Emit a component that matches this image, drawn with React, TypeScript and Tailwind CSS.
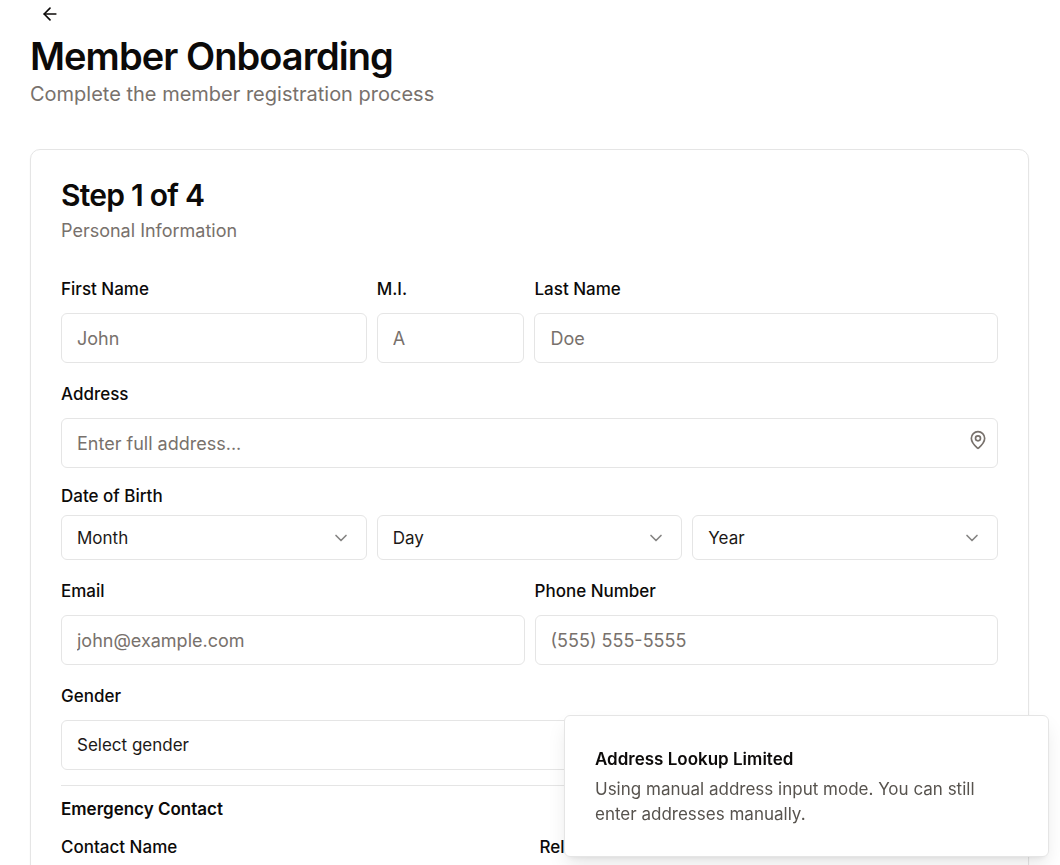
import React from "react";
import { ArrowLeft, ChevronDown, MapPin } from "lucide-react";

const field =
  "block w-full rounded-md border border-[#e5e5e5] bg-white px-[15px] text-[#1c1917] placeholder:text-[#78716c] outline-none focus:border-[#a8a29e]";
const inputStyle = `${field} mt-[11px] h-[50px] text-lg`;
const selectStyle = `${field} appearance-none pt-[2px] text-[17px]`;
const labelStyle = "block text-[17px] leading-[26px] font-medium text-[#0c0a09]";

function TextField({ id, label, placeholder, type = "text", className = "" }: {
  id: string; label: string; placeholder: string; type?: string; className?: string;
}) {
  return (
    <div className={className}>
      <label htmlFor={id} className={labelStyle}>{label}</label>
      <input id={id} type={type} placeholder={placeholder} className={inputStyle} />
    </div>
  );
}

function DatePart({ label }: { label: string }) {
  return (
    <div className="relative">
      <select aria-label={label} className={`${selectStyle} h-[45px]`}>
        <option>{label}</option>
      </select>
      <ChevronDown className="pointer-events-none absolute top-[13px] right-4 size-5 text-[#858483]" />
    </div>
  );
}

export default function App() {
  return (
    <div className="h-screen overflow-hidden bg-white font-['Inter',sans-serif] text-[#0c0a09]">
      <header className="px-[30px]">
        <button type="button" aria-label="Back" className="ml-[10px] flex h-7 items-center">
          <ArrowLeft className="size-5" />
        </button>
        <h1 className="mt-[7px] text-[38px] leading-[42px] font-semibold tracking-tight">Member Onboarding</h1>
        <p className="mt-[3px] text-xl leading-7 text-[#78716c]">Complete the member registration process</p>
      </header>

      <main className="mr-[31px] ml-[30px] mt-[41px] rounded-[10px] border border-[#e5e5e5] px-[30px] pt-[29px] shadow-xs">
        <h2 className="text-[30px] leading-8 font-semibold tracking-tight">Step 1 of 4</h2>
        <p className="mt-[7px] text-lg leading-[26px] text-[#78716c]">Personal Information</p>

        <form className="mt-8">
          <div className="grid grid-cols-6 gap-[10px]">
            <TextField id="first" label="First Name" placeholder="John" className="col-span-2" />
            <TextField id="middle" label="M.I." placeholder="A" />
            <TextField id="last" label="Last Name" placeholder="Doe" className="col-span-3" />
          </div>
          <div className="relative mt-[18px]">
            <TextField id="address" label="Address" placeholder="Enter full address..." />
            <MapPin className="pointer-events-none absolute right-[10px] bottom-[18px] size-5 text-[#78716c]" />
          </div>
          <fieldset className="mt-[15px]">
            <legend className={labelStyle}>Date of Birth</legend>
            <div className="mt-[6px] grid grid-cols-3 gap-[10px]">
              <DatePart label="Month" />
              <DatePart label="Day" />
              <DatePart label="Year" />
            </div>
          </fieldset>
          <div className="mt-[18px] grid grid-cols-2 gap-[10px]">
            <TextField id="email" label="Email" type="email" placeholder="john@example.com" />
            <TextField id="phone" label="Phone Number" type="tel" placeholder="(555) 555-5555" />
          </div>
          <div className="mt-[18px]">
            <label htmlFor="gender" className={labelStyle}>Gender</label>
            <select id="gender" className={`${selectStyle} mt-[11px] h-[50px]`}>
              <option>Select gender</option>
            </select>
          </div>
          <section className="mt-[15px] border-t border-[#e5e5e5] pt-[10px]">
            <h3 className="text-[17px] leading-[26px] font-semibold">Emergency Contact</h3>
            <div className="mt-3 grid grid-cols-2 gap-5">
              <TextField id="contact" label="Contact Name" placeholder="Jane Doe" />
              <TextField id="relationship" label="Relationship" placeholder="Spouse" />
            </div>
          </section>
        </form>
      </main>

      <div role="status" className="fixed right-[11px] bottom-2 w-[485px] rounded-md border border-[#e5e5e5] bg-white pt-[30px] pr-[60px] pb-[29px] pl-[30px] shadow-[0_10px_20px_-3px_rgba(0,0,0,0.1),0_4px_6px_-4px_rgba(0,0,0,0.1)]">
        <p className="text-[17px] leading-[26px] font-semibold">Address Lookup Limited</p>
        <p className="mt-[5px] text-[17px] leading-[25px] text-[#57534e]">Using manual address input mode. You can still enter addresses manually.</p>
      </div>
    </div>
  );
}
